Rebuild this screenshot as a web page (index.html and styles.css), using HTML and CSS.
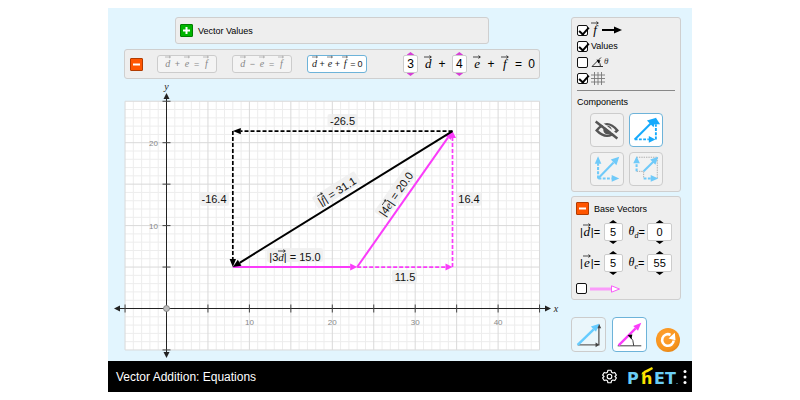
FILE: index.html
```html
<!DOCTYPE html>
<html lang="en">
<head>
  <meta charset="UTF-8">
  <meta name="viewport" content="width=device-width, initial-scale=1.0">
  <title>Vector Addition: Equations</title>
  <link rel="stylesheet" href="styles.css">
</head>
<body>
  <!-- shared arrow drawn over vector symbols -->
  <svg class="defs" width="0" height="0" aria-hidden="true">
    <symbol id="bar" viewBox="0 0 8 4">
      <path d="M0 2H7M5.4 0.6L7.4 2L5.4 3.4" fill="none" stroke="currentColor" stroke-width="0.7"/>
    </symbol>
  </svg>

  <div class="sim">
    <div class="screen">
      <main class="play-area">
        <section class="panel values-panel">
          <button class="toggle expand" aria-label="Expand vector values"><svg viewBox="0 0 11 11"><path d="M2 5.5H9M5.5 2V9"/></svg></button>
          <span>Vector Values</span>
        </section>

        <section class="panel equation-panel">
          <button class="toggle collapse" aria-label="Collapse equation"><svg viewBox="0 0 11 11"><path d="M2 5.5H9"/></svg></button>
          <div class="equation-types">
            <button class="eq" aria-pressed="false"><span class="vec"><svg><use href="#bar"/></svg>d</span><b>+</b><span class="vec"><svg><use href="#bar"/></svg>e</span><b>=</b><span class="vec"><svg><use href="#bar"/></svg>f</span></button>
            <button class="eq" aria-pressed="false"><span class="vec"><svg><use href="#bar"/></svg>d</span><b>−</b><span class="vec"><svg><use href="#bar"/></svg>e</span><b>=</b><span class="vec"><svg><use href="#bar"/></svg>f</span></button>
            <button class="eq" aria-pressed="true"><span class="vec"><svg><use href="#bar"/></svg>d</span><b>+</b><span class="vec"><svg><use href="#bar"/></svg>e</span><b>+</b><span class="vec"><svg><use href="#bar"/></svg>f</span><b>=</b><b>0</b></button>
          </div>
          <div class="equation">
            <span class="picker pink">
              <button class="up" aria-label="Increase d coefficient"></button>
              <input type="text" value="3" aria-label="d coefficient">
              <button class="down" aria-label="Decrease d coefficient"></button>
            </span>
            <span class="vec"><svg><use href="#bar"/></svg>d</span>
            <span>+</span>
            <span class="picker pink">
              <button class="up" aria-label="Increase e coefficient"></button>
              <input type="text" value="4" aria-label="e coefficient">
              <button class="down" aria-label="Decrease e coefficient"></button>
            </span>
            <span class="vec"><svg><use href="#bar"/></svg>e</span>
            <span>+</span>
            <span class="vec"><svg><use href="#bar"/></svg>f</span>
            <span>=</span>
            <span>0</span>
          </div>
        </section>

        <svg class="graph" viewBox="0 1 454 280" role="img" aria-label="Graph of vectors d, e and f">
          <rect x="17" y="21" width="414.5" height="249" fill="#fff"/>
          <g id="grid"></g>
          <g id="axes"></g>
          <g class="labels">
            <g transform="translate(234.5 41)"><rect x="-15" y="-7" width="30" height="13" rx="2"/><text y="4">-26.5</text></g>
            <g transform="translate(106 119)"><rect x="-14" y="-7" width="29" height="14" rx="2"/><text y="4">-16.4</text></g>
            <g transform="translate(361 119)"><rect x="-13" y="-7" width="25" height="14" rx="2"/><text y="4">16.4</text></g>
            <g transform="translate(297 197)"><rect x="-13" y="-7" width="25" height="13" rx="2"/><text y="4">11.5</text></g>
            <g transform="translate(187 177)"><rect x="-28" y="-9" width="56" height="14" rx="2"/><text y="4">|3<tspan class="sym">d</tspan>| = 15.0</text><use href="#bar" x="-17" y="-8" width="8" height="4"/></g>
            <g transform="translate(229 111) rotate(-32)"><rect x="-25" y="-8" width="50" height="14" rx="2"/><text y="4">|<tspan class="sym">f</tspan>| = 31.1</text><use href="#bar" x="-20" y="-8" width="7" height="4"/></g>
            <g transform="translate(288 114) rotate(-55)"><rect x="-27" y="-8" width="54" height="14" rx="2"/><text y="4">|4<tspan class="sym">e</tspan>| = 20.0</text><use href="#bar" x="-17" y="-7" width="7" height="4"/></g>
          </g>
          <g id="vectors"></g>
        </svg>
      </main>

      <aside class="sidebar">
        <section class="panel options">
          <label><input type="checkbox" checked aria-label="Show vector f"><span class="vec"><svg><use href="#bar"/></svg>f</span><svg class="long-arrow" viewBox="0 0 20 8"><path d="M0 4H14" stroke="#000" stroke-width="2"/><path d="M12 0.5L20 4L12 7.5Z"/></svg></label>
          <label><input type="checkbox" checked>Values</label>
          <label><input type="checkbox" aria-label="Show angles"><svg width="18" height="12" viewBox="0 0 18 12" fill="none"><path d="M1 10.5H12M1 10.5L10 1.5M9.5 10.5Q9.5 7 7 5" stroke="#333" stroke-width="1"/><path d="M5.5 3.5L9.5 4.5L7.5 7.5Z" fill="#000"/><text x="13" y="8" class="theta">θ</text></svg></label>
          <label><input type="checkbox" checked aria-label="Show grid"><svg width="14" height="13" viewBox="0 0 14 13"><path d="M3.5 0V13M7 0V13M10.5 0V13M0 3H14M0 6.5H14M0 10H14" stroke="#777" stroke-width="0.9"/></svg></label>
          <hr>
          <h2>Components</h2>
          <div class="components">
            <button class="square" aria-pressed="false" aria-label="Invisible"><svg viewBox="0 0 34 34" fill="none" stroke="#555"><path d="M6 17.5Q17 4 28 17.5Q17 29 6 17.5Z" stroke-width="2.6"/><circle cx="17.5" cy="17" r="3.7" fill="#555" stroke-width="1.5"/><path d="M6.5 6L29.5 24" stroke="#f2f2f2" stroke-width="2.5"/><path d="M5 8L28 26" stroke-width="2.6"/></svg></button>
            <button class="square" aria-pressed="true" aria-label="Triangle"><svg viewBox="0 0 34 34" fill="none" stroke="#16aafc"><path d="M5 27L22 10" stroke-width="2.2"/><path d="M5 27H20M27.5 27V11" stroke-width="2" stroke-dasharray="3 1.5"/><path d="M28 4L25 14L18 7ZM27.5 4L32 11H23ZM27 27L20 23.5V30.5Z" fill="#16aafc" stroke="none"/></svg></button>
            <button class="square" aria-pressed="false" aria-label="Parallelogram"><svg viewBox="0 0 34 34" fill="none" stroke="#70caf9"><path d="M7.5 27L24 10" stroke-width="2.2"/><path d="M7.5 27V11M8 27H22" stroke-width="2.2" stroke-dasharray="3 1.5"/><path d="M30 4L27 13L21 7ZM7.5 3.5L11 11.5H4ZM30 27L22 23.5V30.5Z" fill="#70caf9" stroke="none"/></svg></button>
            <button class="square" aria-pressed="false" aria-label="Projection"><svg viewBox="0 0 34 34" fill="none" stroke="#70caf9"><path d="M7 4.5H29V27M7 19.5H14.5V27" stroke="#999" stroke-width="0.8" stroke-dasharray="1.5 1"/><path d="M14.5 19.5L25 9" stroke-width="2.2"/><path d="M7 19.5V10M14.5 27H22" stroke-width="2.2" stroke-dasharray="3 1.5"/><path d="M30 4L27 12.5L21.5 7ZM7 3.5L10.5 11H3.5ZM30 27L22 23.5V30.5Z" fill="#70caf9" stroke="none"/></svg></button>
          </div>
        </section>

        <section class="panel base">
          <div class="base-title">
            <button class="toggle collapse" aria-label="Collapse base vectors"><svg viewBox="0 0 11 11"><path d="M2 5.5H9"/></svg></button>
            <span>Base Vectors</span>
          </div>
          <div class="base-row">
            <span class="quantity">|<span class="vec"><svg><use href="#bar"/></svg>d</span>|=</span>
            <span class="picker">
              <button class="up" aria-label="Increase d magnitude"></button>
              <input type="text" value="5" aria-label="d magnitude">
              <button class="down" aria-label="Decrease d magnitude"></button>
            </span>
            <span class="quantity angle"><i>θ<sub>d</sub></i>=</span>
            <span class="picker wide">
              <button class="up" aria-label="Increase d angle"></button>
              <input type="text" value="0" aria-label="d angle">
              <button class="down" aria-label="Decrease d angle"></button>
            </span>
          </div>
          <div class="base-row">
            <span class="quantity">|<span class="vec"><svg><use href="#bar"/></svg>e</span>|=</span>
            <span class="picker">
              <button class="up" aria-label="Increase e magnitude"></button>
              <input type="text" value="5" aria-label="e magnitude">
              <button class="down" aria-label="Decrease e magnitude"></button>
            </span>
            <span class="quantity angle"><i>θ<sub>e</sub></i>=</span>
            <span class="picker wide">
              <button class="up" aria-label="Increase e angle"></button>
              <input type="text" value="55" aria-label="e angle">
              <button class="down" aria-label="Decrease e angle"></button>
            </span>
          </div>
          <label><input type="checkbox" aria-label="Show base vectors"><svg width="31" height="8" viewBox="0 0 31 8"><path d="M0 4H22" stroke="#fa9bfa" stroke-width="3"/><path d="M21.5 0.8L29.5 4L21.5 7.2Z" fill="#fff" stroke="#f85cf8"/></svg></label>
        </section>

        <div class="scene-row">
          <button class="scene" aria-pressed="false" aria-label="Cartesian scene"><svg viewBox="0 0 35 35" fill="none"><path d="M6 28.5H28.5V7" stroke="#666" stroke-width="1.5"/><path d="M25 26L29 28.5L25 31ZM26 11L28.5 6L31 11Z" fill="#444"/><path d="M6 28.5L23 12" stroke="#66ccff" stroke-width="2.6"/><path d="M29 6L25.5 14.5L20 9Z" fill="#66ccff"/></svg></button>
          <button class="scene" aria-pressed="true" aria-label="Polar scene"><svg viewBox="0 0 35 35" fill="none"><path d="M5 29.5H30M22 29.5Q22 23 18 19.5" stroke="#333"/><path d="M6 29L24 11" stroke="#fa3cfa" stroke-width="2.4"/><path d="M30 5L26.5 13.5L21.5 8.5Z" fill="#fa3cfa"/><path d="M15.5 18L20.5 17.5L19.5 22.5Z" fill="#000"/></svg></button>
          <button class="reset" aria-label="Reset all"><svg viewBox="0 0 24 24" fill="none"><path d="M14.5 6.8A5.8 5.8 0 1 0 17.7 12.5" stroke="#fff" stroke-width="2.6"/><path d="M12.5 10.5L19.5 12.2L18.8 4.8Z" fill="#fff"/></svg></button>
        </div>
      </aside>
    </div>

    <footer class="navbar">
      <h1>Vector Addition: Equations</h1>
      <button class="nav-button" aria-label="Preferences"><svg width="15" height="15" viewBox="0 0 24 24" fill="none" stroke="#fff" stroke-width="1.8" stroke-linejoin="round"><path d="M9.5 2H14.5L15.3 5.2L17.4 6.4L20.5 5.5L23 9.8L20.7 12L23 14.2L20.5 18.5L17.4 17.6L15.3 18.8L14.5 22H9.5L8.7 18.8L6.6 17.6L3.5 18.5L1 14.2L3.3 12L1 9.8L3.5 5.5L6.6 6.4L8.7 5.2Z"/><circle cx="12" cy="12" r="3.7"/></svg></button>
      <button class="nav-button menu" aria-label="PhET menu">
        <svg width="50" height="26" viewBox="0 0 50 26">
          <text x="-1" y="20" class="logo">P</text>
          <text x="26" y="20" class="logo">ET</text>
          <text x="13" y="20" class="logo figure">h</text>
          <path d="M13 10.5L16 7L24 3L25 5L20 8Z" fill="#fce301"/>
          <circle cx="49" cy="19.5" r="0.6" fill="#6acdf5"/>
        </svg>
        <svg width="4" height="16" viewBox="0 0 4 16" fill="#fff"><circle cx="2" cy="2.5" r="1.5"/><circle cx="2" cy="8" r="1.5"/><circle cx="2" cy="13.5" r="1.5"/></svg>
      </button>
    </footer>
  </div>

  <script src="graph.js"></script>
</body>
</html>
```

FILE: styles.css
```css
* { box-sizing: border-box; }
body {
  margin: 8px;
  background: #fff;
  color: #000;
  font: 9px/12px "Liberation Sans", Arial, sans-serif;
}
button { padding: 0; border: 0; background: none; color: inherit; font: inherit; cursor: pointer; }
h1, h2 { margin: 0; font-size: 9px; font-weight: normal; }
svg { display: block; }
.defs { position: absolute; }

.sim { max-width: 584px; margin: 0 auto; }
.screen { display: flex; gap: 9px; padding: 9px 11px 0 0; background: #e2f5fe; }
.play-area { flex: 1; min-width: 0; }
.panel { border: 1px solid #cfcfcf; border-radius: 3px; background: #eee; }

.values-panel {
  display: flex; align-items: center; gap: 5px;
  margin: 0 73px 5px 67px; padding: 6px 4px;
}
.toggle { width: 13px; height: 13px; border: 1px solid; border-radius: 1px; flex: none; }
.toggle path { fill: none; stroke: #fff; stroke-width: 2; }
.expand { background: #00b500; border-color: #007e00; }
.collapse { background: #ff5500; border-color: #b23b00; }

.equation-panel {
  display: flex; align-items: center;
  margin: 0 22px 2px 16px; padding: 2px 4px 2px 5px;
}
.equation-types { display: flex; gap: 15px; margin-left: 14px; }
.eq {
  display: flex; align-items: center; justify-content: center; gap: 4px;
  width: 60px; height: 18px;
  border: 1px solid #ccc; border-radius: 3px; background: #f4f4f4; color: #888;
  font-size: 9px;
}
.eq b { font-weight: normal; }
.eq .vec { font-size: 10px; }
.eq .vec svg { width: 6px; height: 4px; }
.eq[aria-pressed="true"] { gap: 2px; border-color: #6db3d9; background: #fff; color: #222; }
.equation { display: flex; flex: 1; align-items: center; justify-content: space-between; margin-left: 36px; font-size: 12px; }

.vec {
  display: inline-flex; flex-direction: column; align-items: center;
  font: italic 13px/12px "Liberation Serif", "Times New Roman", serif;
}
.vec svg { width: 8px; height: 4px; margin: -4px 0 -1px; }

/* number pickers, with arrow tabs above and below */
.picker { display: inline-flex; flex-direction: column; align-items: center; width: 15px; color: #000; }
.picker.pink { color: #d63fd6; }
.picker input {
  width: 100%; height: 18px; padding: 0;
  border: 1px solid #ccc; border-radius: 2px; background: #fff; color: #000;
  font: 12px "Liberation Sans", Arial, sans-serif; text-align: center;
}
.base .picker input { font-size: 11px; }
.up, .down { width: 8px; height: 3px; background: currentColor; }
.up { clip-path: polygon(50% 0, 100% 100%, 0 100%); }
.down { clip-path: polygon(0 0, 100% 0, 50% 100%); }

.graph { width: 100%; }
.graph text { font-family: "Liberation Sans", Arial, sans-serif; text-anchor: middle; }
.labels rect { fill: #eee; fill-opacity: 0.8; }
.labels text { font-size: 11px; fill: #111; }
.graph .sym, .graph .axis-name { font-family: "Liberation Serif", "Times New Roman", serif; font-style: italic; }
.graph .axis-name { font-size: 10px; fill: #222; }
.graph .tick { font-size: 8px; fill: #888; }

.sidebar { width: 110px; flex: none; }
.sidebar label { display: flex; align-items: center; gap: 3px; height: 16px; }
.sidebar input[type="checkbox"] {
  appearance: none; flex: none;
  width: 11px; height: 11px; margin: 0;
  border: 1px solid #111; border-radius: 2px; background: #fff;
}
.sidebar input[type="checkbox"]:checked::after {
  content: ""; display: block;
  width: 4px; height: 8px; margin: -1px 0 0 3px;
  border: solid #000; border-width: 0 2px 2px 0;
  transform: rotate(42deg);
}
.long-arrow { width: 20px; height: 8px; }
.theta { font: italic 9px "Liberation Serif", "Times New Roman", serif; fill: #333; }
.options { padding: 4px 5px 5px; }
.options hr { height: 1px; margin: 4px 0 5px; border: 0; background: #888; }
.components { display: grid; grid-template-columns: 34px 34px; justify-content: center; gap: 5px; margin-top: 5px; }
.square, .scene { border: 1px solid #ccc; border-radius: 4px; background: #f2f2f2; }
.square { height: 34px; }
.square svg, .scene svg { width: 100%; height: 100%; }
.square[aria-pressed="true"], .scene[aria-pressed="true"] { border-color: #6db3d9; background: #fff; }

.base { margin-top: 4px; padding: 5px 4px 4px; }
.base-title { display: flex; align-items: center; gap: 5px; }
.base-row { display: flex; align-items: center; height: 24px; margin: 5px 4px 7px; }
.base .picker { width: 19px; }
.base .picker.wide { width: 25px; }
.quantity { display: flex; align-items: center; width: 24px; font-size: 11px; }
.quantity.angle { width: 19px; margin-left: 6px; }
.quantity i { font: italic 12px "Liberation Serif", "Times New Roman", serif; }
.quantity sub { font-size: 8px; line-height: 1; }
.base label { height: 13px; }

.scene-row { display: flex; align-items: flex-end; margin-top: 17px; gap: 6px; }
.scene { width: 35px; height: 35px; flex: none; }
.scene[aria-pressed="false"] { background: #eaf6fb; }
.reset { width: 24px; height: 24px; border-radius: 50%; background: radial-gradient(circle at 40% 35%, #ffa030, #f7941d 60%, #cc7410); margin-left: 3px; }

.navbar { display: flex; align-items: center; height: 31px; padding: 0 5px 0 8px; background: #000; color: #fff; }
.navbar h1 { flex: 1; font-size: 12px; line-height: 16px; }
.nav-button { display: flex; align-items: center; }
.menu { gap: 5px; margin-left: 11px; }
.menu svg { overflow: visible; }
.logo { font: bold 16px "DejaVu Sans", sans-serif; fill: #6acdf5; }
.logo.figure { fill: #fce301; }
```

FILE: graph.js
```js
const UNIT = 8.29;
const ORIGIN = { x: 58.5, y: 228.5 };
const PINK = '#fa3cfa';

const px = x => ORIGIN.x + x * UNIT;
const py = y => ORIGIN.y - y * UNIT;
const grid = document.getElementById('grid');
const axes = document.getElementById('axes');
const vectors = document.getElementById('vectors');

function add(parent, name, attrs, text) {
  const el = document.createElementNS('http://www.w3.org/2000/svg', name);
  for (const key in attrs) el.setAttribute(key, attrs[key]);
  if (text !== undefined) el.textContent = text;
  parent.appendChild(el);
}

function line(parent, x1, y1, x2, y2, stroke, width, dash) {
  add(parent, 'line', { x1, y1, x2, y2, stroke, 'stroke-width': width, 'stroke-dasharray': dash || 'none' });
}

function arrow(parent, x1, y1, x2, y2, color, width, head, half, dash) {
  const length = Math.hypot(x2 - x1, y2 - y1);
  const ux = (x2 - x1) / length;
  const uy = (y2 - y1) / length;
  const bx = x2 - ux * head;
  const by = y2 - uy * head;
  line(parent, x1, y1, bx, by, color, width, dash);
  add(parent, 'path', {
    d: `M${x2} ${y2}L${bx - uy * half} ${by + ux * half}L${bx + uy * half} ${by - ux * half}Z`,
    fill: color
  });
}

// Minor lines first so the major ones stay on top
for (const major of [false, true]) {
  const color = major ? '#d9d9d9' : '#ededed';
  for (let x = -5; x <= 45; x++) {
    if ((x % 5 === 0) === major) line(grid, px(x), py(-5), px(x), py(25), color, 1);
  }
  for (let y = -5; y <= 25; y++) {
    if ((y % 5 === 0) === major) line(grid, px(-5), py(y), px(45), py(y), color, 1);
  }
}

// Axes
arrow(axes, px(0), py(0), 6, py(0), '#222', 1, 6, 3);
arrow(axes, px(0), py(0), 443, py(0), '#222', 1, 6, 3);
arrow(axes, px(0), py(0), px(0), 13, '#222', 1, 6, 3);
arrow(axes, px(0), py(0), px(0), 278, '#222', 1, 6, 3);
for (let x = -5; x <= 45; x += 5) {
  line(axes, px(x), py(0) - 4, px(x), py(0) + 4, '#444', 1);
  if (x > 0 && x % 10 === 0) add(axes, 'text', { x: px(x), y: py(0) + 16, class: 'tick' }, x);
}
for (let y = -5; y <= 25; y += 5) {
  line(axes, px(0) - 4, py(y), px(0) + 4, py(y), '#444', 1);
  if (y > 0 && y % 10 === 0) add(axes, 'text', { x: px(0) - 13, y: py(y) + 3, class: 'tick' }, y);
}
add(axes, 'text', { x: 448, y: py(0) + 3, class: 'axis-name' }, 'x');
add(axes, 'text', { x: px(0), y: 10, class: 'axis-name' }, 'y');
add(axes, 'circle', { cx: px(0), cy: py(0), r: 3, fill: '#bbb', stroke: '#777', 'stroke-width': 0.8 });

// Component vectors, then d, e and f
const tail = [px(8), py(5)];
const joint = [px(23), py(5)];
const tip = [px(34.5), py(21.4)];
arrow(vectors, ...joint, tip[0], tail[1], PINK, 1.7, 7, 3.5, '4 2');
arrow(vectors, tip[0], tail[1], ...tip, PINK, 1.7, 7, 3.5, '4 2');
arrow(vectors, ...tip, tail[0], tip[1], '#000', 1.7, 8, 3.2, '4 2');
arrow(vectors, tail[0], tip[1], ...tail, '#000', 1.7, 8, 3.2, '4 2');
arrow(vectors, ...tail, ...joint, PINK, 2, 7, 3.5);
arrow(vectors, ...joint, ...tip, PINK, 2, 8, 4);
arrow(vectors, ...tip, ...tail, '#000', 2, 8, 3.5);
```
